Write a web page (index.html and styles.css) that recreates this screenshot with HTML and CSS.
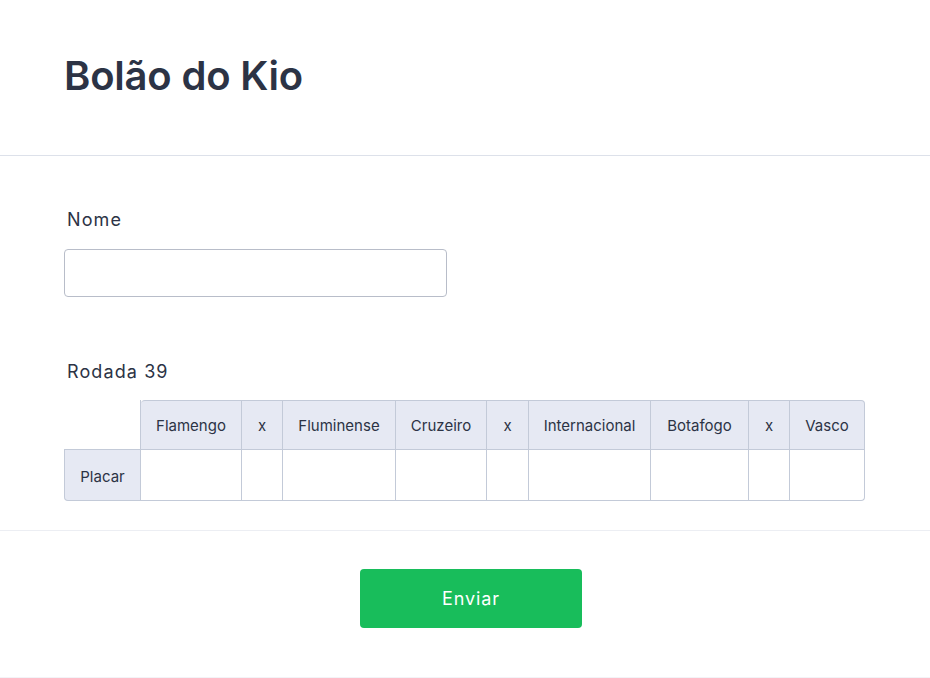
FILE: index.html
```html
<!DOCTYPE html>
<html lang="pt">
<head>
<meta charset="utf-8">
<title>Bolão do Kio</title>
<link rel="stylesheet" href="styles.css">
</head>
<body>
<div class="page">
  <header class="header">
    <h1 class="title">Bolão do Kio</h1>
  </header>
  <section class="fields">
    <div class="field">
      <label class="label" for="nome">Nome</label>
      <input class="input" id="nome" type="text">
    </div>
    <div class="field field-table">
      <div class="label">Rodada 39</div>
      <table class="matrix">
        <thead>
          <tr>
            <th class="corner"></th>
            <th class="c1 first">Flamengo</th>
            <th class="c2">x</th>
            <th class="c3">Fluminense</th>
            <th class="c4">Cruzeiro</th>
            <th class="c5">x</th>
            <th class="c6">Internacional</th>
            <th class="c7">Botafogo</th>
            <th class="c8">x</th>
            <th class="c9 last">Vasco</th>
          </tr>
        </thead>
        <tbody>
          <tr>
            <th class="rowhead">Placar</th>
            <td></td><td></td><td></td><td></td><td></td><td></td><td></td><td></td><td class="lastcell"></td>
          </tr>
        </tbody>
      </table>
    </div>
  </section>
  <section class="actions">
    <button class="submit" type="button">Enviar</button>
  </section>
</div>
</body>
</html>
```

FILE: styles.css
```css
* { box-sizing: border-box; }
html, body { margin: 0; padding: 0; background: #ffffff; }
body {
  font-family: Inter, "Noto Sans", "Liberation Sans", sans-serif;
  color: #2c3345;
}
.page {
  width: 930px;
  height: 678px;
  border-bottom: 1px solid #f3f3f7;
}
.header {
  padding: 52px 64px 55px;
  border-bottom: 1px solid #dde1ea;
}
.title {
  margin: 0;
  font-size: 40px;
  line-height: 48px;
  font-weight: 600;
  letter-spacing: -0.2px;
  color: #2c3345;
}
.fields {
  padding: 52px 64px 29px;
  border-bottom: 1px solid #eceef3;
}
.field { display: flex; flex-direction: column; align-items: flex-start; }
.field-table { margin-top: 63px; }
.label {
  font-size: 18px;
  line-height: 24px;
  font-weight: 400;
  letter-spacing: 1.1px;
  color: #2c3345;
  padding-left: 3px;
  margin-bottom: 17px;
}
.field-table .label { margin-bottom: 16px; }
.input {
  width: 383px;
  height: 48px;
  border: 1px solid #b8bdc9;
  border-radius: 4px;
  background: #fff;
  font: inherit;
}
.matrix {
  border-collapse: separate;
  border-spacing: 0;
  font-size: 15px;
  color: #2c3345;
}
.matrix th, .matrix td {
  padding: 0;
  text-align: center;
  font-weight: 400;
  border-right: 1px solid #c3cad8;
  border-bottom: 1px solid #c3cad8;
}
.matrix thead th {
  height: 50px;
  background: #e6e9f3;
  border-top: 1px solid #c3cad8;
}
.matrix tbody th, .matrix tbody td { height: 51px; padding-top: 2px; }
.matrix thead th.corner {
  background: transparent;
  border-top: none;
  width: 77px;
}
.matrix th.first { border-top-left-radius: 4px; }
.matrix th.last { border-top-right-radius: 4px; }
.matrix .rowhead {
  background: #e6e9f3;
  border-left: 1px solid #c3cad8;
  border-bottom-left-radius: 4px;
}
.matrix td { background: #fff; }
.matrix td.lastcell { border-bottom-right-radius: 4px; }
.c1 { width: 101px; }
.c2 { width: 41px; }
.c3 { width: 113px; }
.c4 { width: 91px; }
.c5 { width: 42px; }
.c6 { width: 122px; }
.c7 { width: 98px; }
.c8 { width: 41px; }
.c9 { width: 75px; }
.actions {
  display: flex;
  justify-content: center;
  padding-top: 38px;
  padding-left: 12px;
}
.submit {
  width: 222px;
  height: 59px;
  border: none;
  border-radius: 4px;
  background: #18bd5b;
  color: #ffffff;
  font-family: Inter, "Noto Sans", "Liberation Sans", sans-serif;
  font-size: 18px;
  font-weight: 400;
  letter-spacing: 0.9px;
}
```
